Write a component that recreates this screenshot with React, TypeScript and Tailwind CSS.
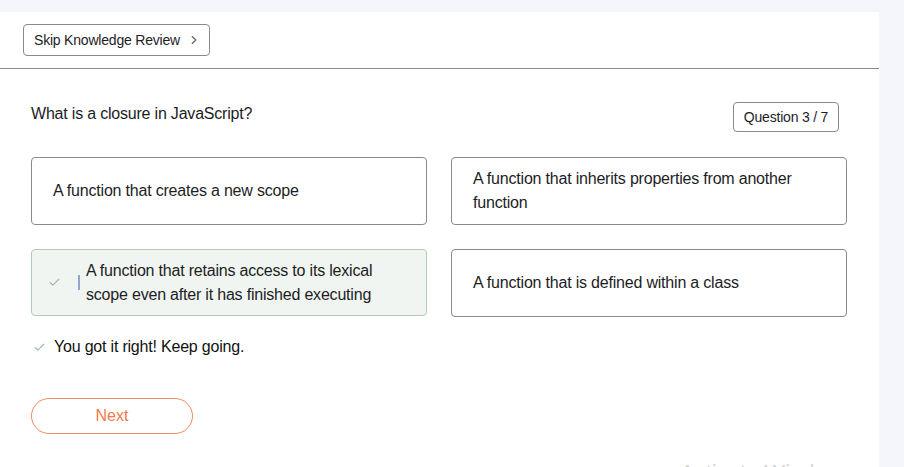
import { ChevronRight, Check } from "lucide-react";

const options = [
  { id: 1, text: "A function that creates a new scope", correct: false },
  { id: 2, text: "A function that inherits properties from another function", correct: false },
  { id: 3, text: "A function that retains access to its lexical scope even after it has finished executing", correct: true },
  { id: 4, text: "A function that is defined within a class", correct: false },
];

export default function App() {
  return (
    <div
      className="relative h-[467px] overflow-hidden bg-[#f5f6fb] pt-3 pr-[25px] text-[#1d1d1f]"
      style={{ fontFamily: '"Liberation Sans", Arial, sans-serif' }}
    >
      <div className="h-full w-[879px] bg-white">
        <div className="h-[57px] border-b border-[#8a8a8a] pl-[23px] pt-3">
          <button className="flex h-[32px] w-[187px] items-center gap-1 rounded-[4px] border border-[#8a8a8a] pl-[10px] text-[14px] tracking-[-0.2px]">
            Skip Knowledge Review
            <ChevronRight className="ml-[3px] h-[14px] w-[14px] text-[#666]" strokeWidth={2} />
          </button>
        </div>

        <div className="w-[847px] pl-[31px]">
          <div className="mt-[33px] flex items-start justify-between">
            <p className="text-[16px] tracking-[-0.2px]">What is a closure in JavaScript?</p>
            <span className="mr-[8px] flex h-[30px] w-[106px] items-center justify-center rounded-[4px] border border-[#8a8a8a] text-[14px] tracking-[-0.2px]">
              Question 3 / 7
            </span>
          </div>

          <div className="mt-[25px] grid grid-cols-2 gap-x-6 gap-y-[24px]">
            {options.map((o) =>
              o.correct ? (
                <div
                  key={o.id}
                  className="flex h-[67px] items-center rounded-[4px] border border-[#b3ccb9] bg-[#f0f5f1] pl-[16px] pr-4"
                >
                  <Check className="h-[13px] w-[13px] shrink-0 text-[#9dbaa6]" strokeWidth={2} />
                  <span className="ml-[17px] mr-[6px] h-[15px] w-[2px] shrink-0 bg-[#94a6cf]" />
                  <span className="max-w-[300px] text-[16px] leading-[24px] tracking-[-0.2px]">{o.text}</span>
                </div>
              ) : (
                <div
                  key={o.id}
                  className="flex h-[68px] items-center rounded-[4px] border border-[#8a8a8a] pl-[21px] pr-8"
                >
                  <span className="text-[16px] leading-[24px] tracking-[-0.2px]">{o.text}</span>
                </div>
              )
            )}
          </div>

          <div className="mt-[18px] flex items-center gap-[8px] pl-[2px]">
            <Check className="h-[13px] w-[13px] shrink-0 text-[#9dbaa6]" strokeWidth={2} />
            <span className="text-[16px] tracking-[-0.2px] text-[#111]">You got it right! Keep going.</span>
          </div>

          <button className="mt-[39px] flex h-[36px] w-[162px] items-center justify-center rounded-full border border-[#f58a60] text-[16px] text-[#f47b4a]">
            Next
          </button>
        </div>
      </div>

      <span className="absolute left-[680px] top-[456px] text-[22px] text-[#d6d6d6]">Activate Windows</span>
    </div>
  );
}
